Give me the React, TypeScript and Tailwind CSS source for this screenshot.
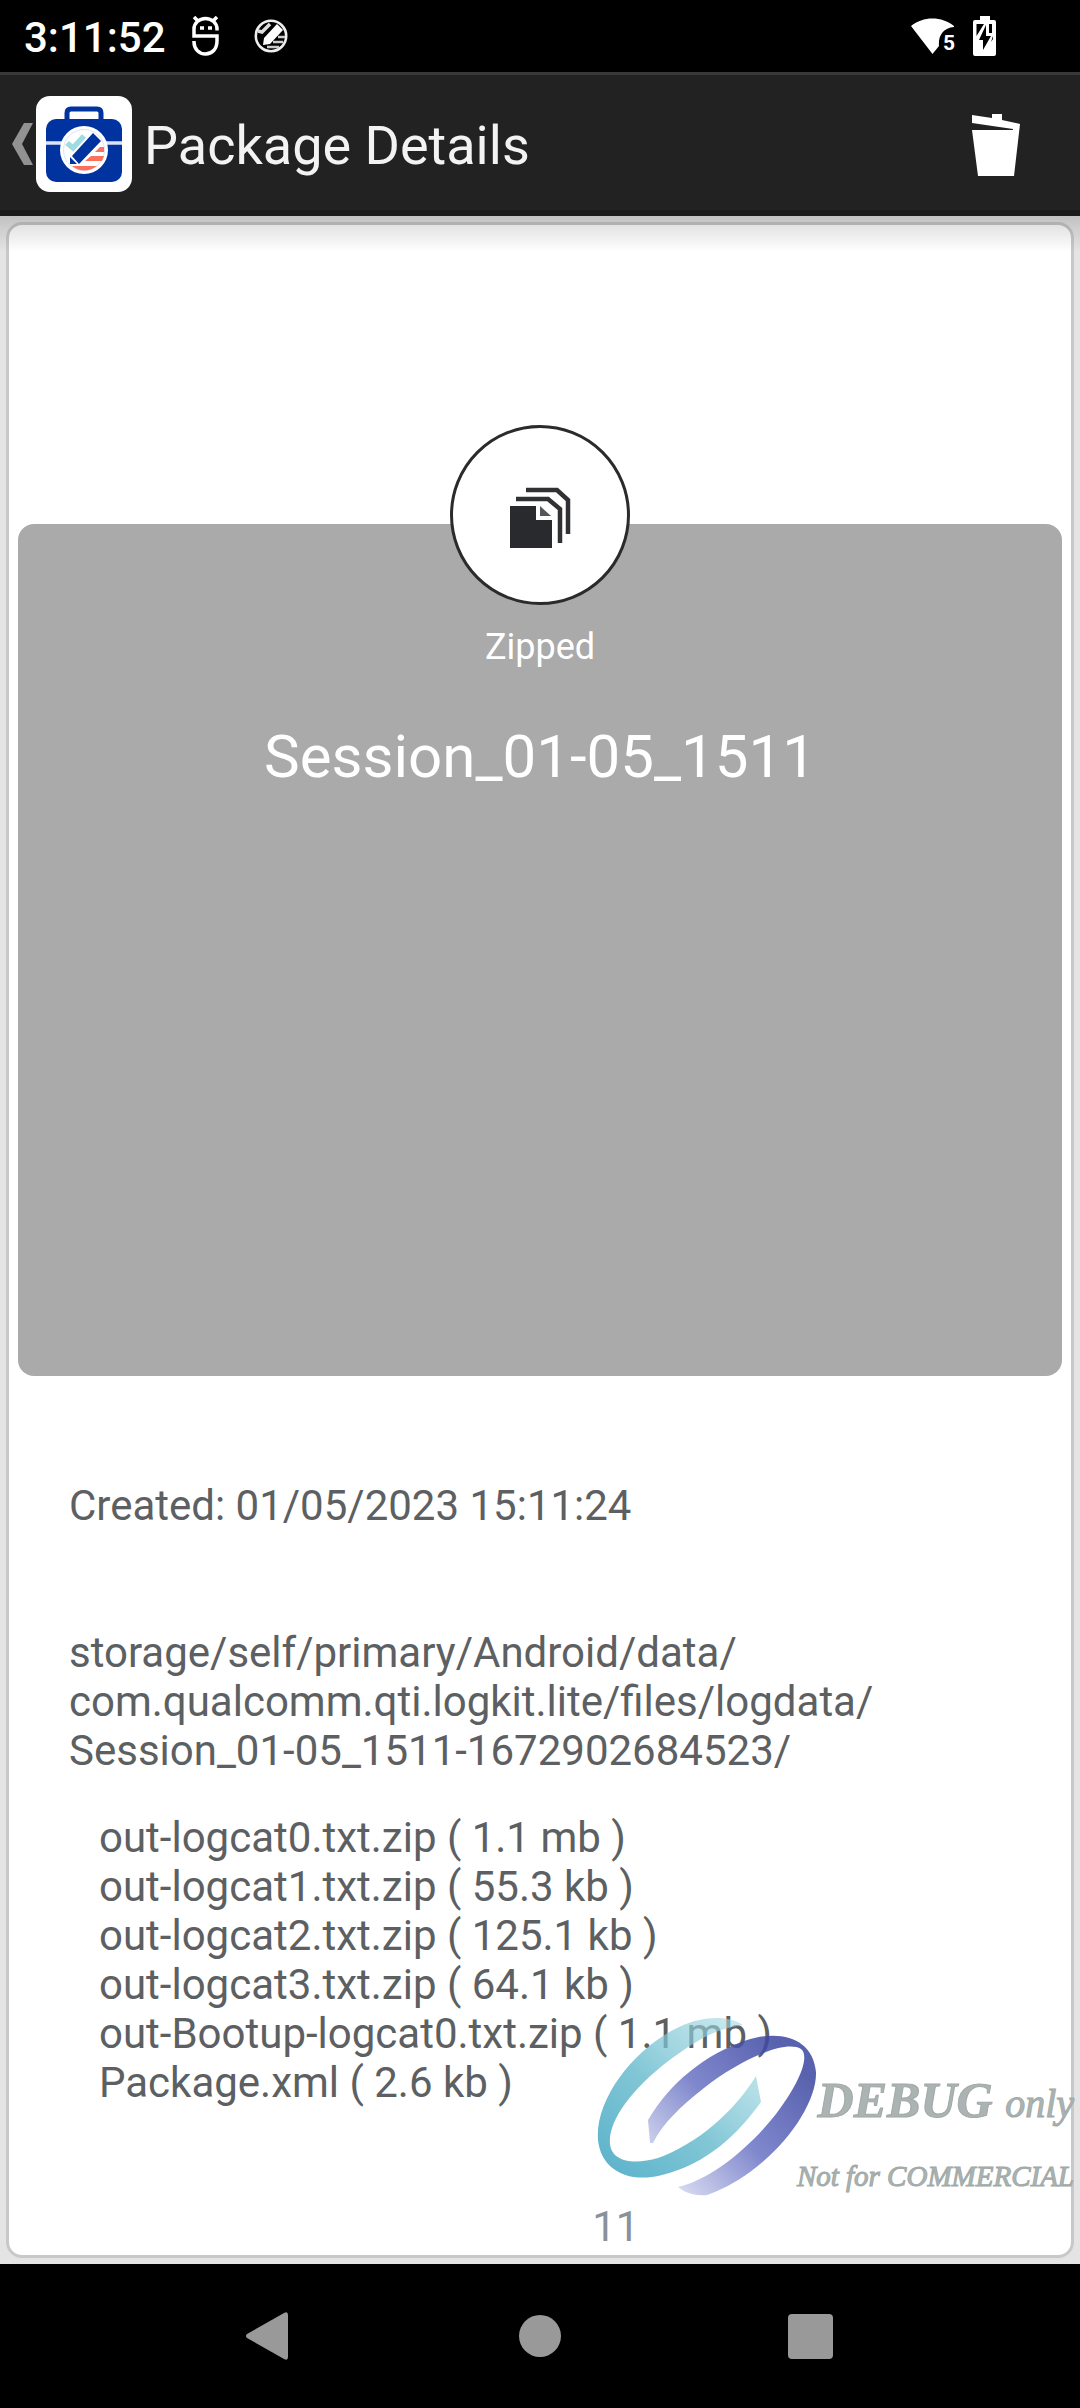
import React from "react";

const files = [
  "out-logcat0.txt.zip ( 1.1 mb )",
  "out-logcat1.txt.zip ( 55.3 kb )",
  "out-logcat2.txt.zip ( 125.1 kb )",
  "out-logcat3.txt.zip ( 64.1 kb )",
  "out-Bootup-logcat0.txt.zip ( 1.1 mb )",
  "Package.xml ( 2.6 kb )",
];

function StatusBar() {
  return (
    <div className="flex h-[72px] items-center justify-between bg-black pl-6 pr-[84px] text-white">
      <div className="flex items-center">
        <time className="w-[168px] pt-[3px] text-[42px] leading-[48px] font-medium">3:11:52</time>
        <svg className="h-10 w-[27px]" viewBox="0 0 27 40" fill="none" stroke="white" strokeWidth="3.5">
          <path d="M25 14.5V13A11.5 10.5 0 0 0 2 13V20H25V25C25 33 20 38 13.5 38C7 38 2 33 2 26V25" />
          <path d="M2 1L6 5M25 1L21 5" />
          <path d="M8 12h4M16 12h4" />
        </svg>
        <svg className="ml-[35px] h-[34px] w-[34px]" viewBox="0 0 34 34" fill="none">
          <circle cx="17" cy="17" r="15.2" stroke="#eee" strokeWidth="2.6" />
          <path d="M4 12l4 1 8-8" stroke="#ddd" strokeWidth="3.5" />
          <path d="M9 26l1-7L23 5l6 6-13 14z" fill="white" />
          <path d="M24 18h7M19 23h10M13 28h12" stroke="#ccc" strokeWidth="2.6" />
        </svg>
      </div>
      <div className="flex items-center gap-[18px]">
        <svg className="h-9 w-11" viewBox="0 0 44 36" fill="white">
          <path d="M0 8C12-2 31-2 43 8L43 9C32 10 27 18 28 28L21.5 36Z" />
          <text x="32" y="32" fontSize="21" fontWeight="700" fontFamily="Roboto, sans-serif">5</text>
        </svg>
        <svg className="h-10 w-[23px]" viewBox="0 0 23 40">
          <path d="M7 0h10v4h4a2 2 0 0 1 2 2v32a2 2 0 0 1-2 2H2a2 2 0 0 1-2-2V6a2 2 0 0 1 2-2h5z" fill="white" />
          <path d="M3.5 8H11L3.5 20zM13 9v11h5L10 34V24H6zM16 8h3v9h-3zM20 20v3l-2 3z" fill="black" />
        </svg>
      </div>
    </div>
  );
}

function AppIcon() {
  return (
    <svg className="h-24 w-24" viewBox="0 0 96 96">
      <rect width="96" height="96" rx="14" fill="white" />
      <path d="M31 28V17q0-4 4-4h26q4 0 4 4v11" fill="none" stroke="#0033a0" strokeWidth="5" />
      <rect x="10" y="23" width="76" height="63" rx="10" fill="#0033a0" />
      <path d="M10 47h76" stroke="#dbe3f5" strokeWidth="3.5" />
      <circle cx="48" cy="54" r="24" fill="white" />
      <circle cx="48" cy="54" r="20.5" fill="none" stroke="#dde4f5" strokeWidth="1" />
      <path d="M31 47l6 5L48 40" fill="none" stroke="#9fdbe0" strokeWidth="5.5" />
      <path d="M36 60L57 37l8 8-22 23zM34 61l7 7h-7z" fill="#0033a0" />
      <path d="M59 56l5-5h4v5zM49 65l6-5h13l-2 5zM36 70h25q-13 9-25 0z" fill="#ff6f5e" />
    </svg>
  );
}

function ActionBar() {
  return (
    <header className="flex h-36 items-center justify-between border-t-[3px] border-b-[6px] border-t-[#393939] border-b-[#1b1b1b] bg-[#222222] pt-[3px] pr-[54px] pl-3">
      <div className="flex items-center">
        <button type="button" aria-label="Navigate up" className="flex items-center gap-[3px]">
          <svg className="h-[42px] w-[21px]" viewBox="0 0 21 42" fill="#929292">
            <path d="M12 0h9L10 21l11 21h-9L0 21z" />
          </svg>
          <AppIcon />
        </button>
        <h1 className="ml-3 pt-1 text-[54px] leading-[64px] text-[#f3f3f3]">Package Details</h1>
      </div>
      <button type="button" aria-label="Delete package" className="flex w-[60px] justify-center">
        <svg className="h-[63px] w-[50px]" viewBox="0 0 50 63" fill="white">
          <path d="M1 2L21 5V1h10v6l18 4-6 52H7L1 17h41v-1L1 10z" />
        </svg>
      </button>
    </header>
  );
}

function PackageBadge() {
  return (
    <div className="-mt-[99px] flex h-[180px] w-[180px] items-center justify-center rounded-full border-[3px] border-[#2b2b2d] bg-white pt-1.5">
      <svg className="h-[62px] w-[62px]" viewBox="0 0 62 62">
        <path d="M1 19h26v14h16v28H1z" fill="#292a2d" />
        <path d="M31 19l11 10H31z" fill="#55565a" />
        <path d="M7 12h32l12 10v34M17 3h31l11 10v34" fill="none" stroke="#303134" strokeWidth="4.5" />
      </svg>
    </div>
  );
}

function Watermark() {
  return (
    <div className="pointer-events-none absolute right-[6px] bottom-16 flex items-start">
      <svg className="h-[184px] w-[224px]" viewBox="0 0 224 184">
        <defs>
          <linearGradient id="teal" x1="0" y1="1" x2="0.9" y2="0.1">
            <stop offset="0" stopColor="#45a8c4" stopOpacity="0.9" />
            <stop offset="0.5" stopColor="#62b8cb" stopOpacity="0.8" />
            <stop offset="1" stopColor="#a2d8e2" stopOpacity="0.6" />
          </linearGradient>
          <linearGradient id="indigo" x1="0.1" y1="0.9" x2="0.9" y2="0.2">
            <stop offset="0" stopColor="#d0d4ee" stopOpacity="0.8" />
            <stop offset="0.5" stopColor="#5f69c0" stopOpacity="0.8" />
            <stop offset="1" stopColor="#3b469f" stopOpacity="0.85" />
          </linearGradient>
        </defs>
        <path
          d="M146 9C132 0 108-1 82 11C38 32-2 82 1 124C4 153 30 168 65 159C110 148 141 118 164 86L159 60C137 96 100 128 61 142C37 149 15 146 13 128C11 105 34 74 70 46C100 24 117 13 146 9Z"
          fill="url(#teal)"
        />
        <path
          d="M51 104C73 67 108 38 150 24C185 13 216 23 219 56C220 84 193 127 153 156C138 167 122 175 110 179C98 180 88 177 81 171C115 163 153 131 179 98C206 62 212 39 204 33C188 23 141 45 107 72C84 90 65 108 56 127H53Z"
          fill="url(#indigo)"
        />
      </svg>
      <div className="-ml-6 flex flex-col items-end pt-[54px] font-['Liberation_Serif',serif] whitespace-nowrap italic text-[#abb4b2] [-webkit-text-stroke:1px_#a0a9a7]">
        <p className="text-[50px] leading-[60px]">
          <strong className="font-bold">DEBUG</strong> <span className="text-[40px]">only</span>
        </p>
        <p className="mt-6 text-[29px] leading-9">Not for COMMERCIAL</p>
      </div>
    </div>
  );
}

function NavBar() {
  return (
    <nav className="flex h-36 items-center justify-center bg-black">
      <button type="button" aria-label="Back" className="flex w-[270px] justify-center pr-[6px]">
        <svg className="h-12 w-[42px]" viewBox="0 0 42 48" fill="#999">
          <path d="M1 22L38 1q4-2 4 2v42q0 4-4 2L1 26q-2-2 0-4z" />
        </svg>
      </button>
      <button type="button" aria-label="Home" className="flex w-[270px] justify-center">
        <span className="h-[42px] w-[42px] rounded-full bg-[#999]" />
      </button>
      <button type="button" aria-label="Recent apps" className="flex w-[270px] justify-center">
        <span className="h-[45px] w-[45px] rounded-[4px] bg-[#999]" />
      </button>
    </nav>
  );
}

export default function App() {
  return (
    <div className="flex min-h-screen flex-col bg-[#e4e4e4] font-['Roboto',sans-serif]">
      <StatusBar />
      <ActionBar />
      <main className="relative flex flex-1 flex-col p-[6px]">
        <div className="pointer-events-none absolute inset-x-0 top-0 h-9 bg-linear-to-b from-black/15 to-transparent" />
        <article className="flex flex-1 flex-col rounded-[16px] border-[3px] border-[#c8c8c8] bg-white px-[9px] pt-[299px]">
          <section className="flex h-[852px] flex-col items-center rounded-[16px] bg-[#aaaaaa] text-white">
            <PackageBadge />
            <p className="mt-[21px] text-[36px] leading-[42px]">Zipped</p>
            <h2 className="mt-[54px] text-[60px] leading-[70px]">Session_01-05_1511</h2>
          </section>
          <div className="px-[51px] pt-[105px] text-[42px] leading-[49px] text-[#5d6062]">
            <p>Created: 01/05/2023 15:11:24</p>
            <p className="mt-[98px]">
              storage/self/primary/Android/data/
              <br />
              com.qualcomm.qti.logkit.lite/files/logdata/
              <br />
              Session_01-05_1511-1672902684523/
            </p>
            <ul className="mt-[38px] pl-[30px]">
              {files.map((file) => (
                <li key={file}>{file}</li>
              ))}
            </ul>
          </div>
          <p className="mt-auto mb-1 pl-[55%] text-[42px] leading-[49px] text-[#89929a]">11</p>
        </article>
        <Watermark />
      </main>
      <NavBar />
    </div>
  );
}
